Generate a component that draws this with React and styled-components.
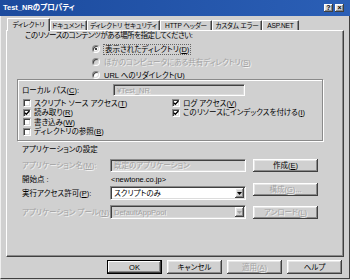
import React from "react";
import styled, { createGlobalStyle, css } from "styled-components";

const FACE = `"Liberation Sans", "Noto Sans CJK JP", sans-serif`;
const BG = "#d0d0d0";
const DIS = "#a2a2a2";

const Global = createGlobalStyle`
  html, body { margin: 0; padding: 0; background: ${BG}; }
  body {
    font-family: ${FACE};
    font-size: 7.5px;
    font-feature-settings: "palt";
    color: #000;
  }
  #root { width: 350px; height: 280px; }
  u { text-decoration: underline; text-underline-offset: 1px; }
`;

const disabledText = css`
  color: ${DIS};
  text-shadow: 1px 1px 0 rgba(255, 255, 255, 0.75);
`;

const raised = css`
  background: ${BG};
  box-shadow: inset -1px -1px 0 #404040, inset 1px 1px 0 #ffffff,
    inset -2px -2px 0 #8a8a8a, inset 2px 2px 0 #e6e6e6;
`;

const sunken = css`
  border: 1px solid;
  border-color: #8a8a8a #ffffff #ffffff #8a8a8a;
  box-shadow: inset 1px 1px 0 #404040, inset -1px -1px 0 #dcdcdc;
  box-sizing: border-box;
`;

const Win = styled.div`
  width: 350px;
  height: 279px;
  display: flex;
  flex-direction: column;
  background: ${BG};
  overflow: hidden;
`;

const TitleBar = styled.div`
  height: 16px;
  flex: none;
  display: flex;
  align-items: center;
  padding: 0 6px 0 3px;
  background: linear-gradient(90deg, #1c4b9e, #2b5fb6);
  color: #fff;
  font-weight: bold;
  font-size: 7.5px;
  line-height: 16px;
`;

const TitleText = styled.span`
  white-space: nowrap;
`;

const CapButtons = styled.div`
  margin-left: auto;
  display: flex;
  gap: 2px;
`;

const CapButton = styled.span`
  ${raised};
  width: 9px;
  height: 8px;
  display: flex;
  align-items: center;
  justify-content: center;
  color: #000;
  font-size: 7px;
  line-height: 8px;
  font-weight: bold;
`;

const Body = styled.div`
  flex: 1;
  display: flex;
  flex-direction: column;
  padding: 0 5px 0 5px;
  border-left: 1px solid #efefef;
  border-right: 1px solid #404040;
  border-bottom: 1px solid #404040;
`;

const TabStrip = styled.div`
  height: 14px;
  display: flex;
  align-items: flex-end;
  padding-left: 1px;
  position: relative;
  z-index: 1;
`;

const Tab = styled.div`
  width: ${(p) => p.$w}px;
  height: ${(p) => (p.$active ? 13 : 10)}px;
  ${(p) => (p.$active ? "margin-bottom: -1px;" : "")}
  box-sizing: border-box;
  background: ${BG};
  border-top: 1px solid #fff;
  border-left: 1px solid #fff;
  border-right: 1px solid #404040;
  border-radius: 1px 1px 0 0;
  box-shadow: inset -1px 0 0 #8a8a8a;
  display: flex;
  justify-content: center;
  align-items: ${(p) => (p.$active ? "flex-start" : "center")};
  padding-top: ${(p) => (p.$active ? 1 : 0)}px;
  font-size: 6.6px;
  line-height: 9px;
  white-space: nowrap;
  letter-spacing: -0.15px;
`;

const Panel = styled.div`
  height: 227px;
  box-sizing: border-box;
  border-top: 1px solid #fff;
  border-left: 1px solid #fff;
  border-right: 1px solid #404040;
  border-bottom: 1px solid #404040;
  box-shadow: inset -1px -1px 0 #8a8a8a;
  display: flex;
  flex-direction: column;
`;

const Intro = styled.div`
  height: 10px;
  line-height: 10px;
  margin-left: 18px;
  white-space: nowrap;
  letter-spacing: -0.5px;
`;

const RadioList = styled.div`
  margin: 3px 0 0 85px;
  display: flex;
  flex-direction: column;
  gap: 3px;
`;

const OptionRow = styled.div`
  height: ${(p) => p.$h || 10}px;
  display: flex;
  align-items: center;
  gap: ${(p) => p.$gap || 4}px;
  white-space: nowrap;
  line-height: 9px;
  ${(p) => p.$disabled && disabledText};
`;

const RadioDot = styled.span`
  ${sunken};
  width: 8px;
  height: 8px;
  border-radius: 50%;
  flex: none;
  background: ${(p) => (p.$disabled ? BG : "#fff")};
  display: flex;
  align-items: center;
  justify-content: center;
  &::after {
    content: "";
    width: 2px;
    height: 2px;
    border-radius: 50%;
    background: ${(p) => (p.$checked ? "#000" : "transparent")};
  }
`;

const Focus = styled.span`
  outline: 1px dotted #666;
  outline-offset: 0;
  padding: 0 1px;
  line-height: 9px;
`;

const GroupBox = styled.div`
  margin: -1px 0 0 10px;
  width: 306px;
  height: 62px;
  box-sizing: border-box;
  border: 1px solid #8a8a8a;
  box-shadow: 1px 1px 0 #fff, inset 1px 1px 0 #fff;
  padding: 4px 0 0 4px;
  display: flex;
  flex-direction: column;
`;

const PathRow = styled.div`
  height: 12px;
  display: flex;
  align-items: center;
`;

const FieldLabel = styled.span`
  width: ${(p) => p.$w}px;
  flex: none;
  white-space: nowrap;
  line-height: 9px;
  ${(p) => p.$disabled && disabledText};
`;

const TextBox = styled.div`
  ${sunken};
  width: ${(p) => p.$w}px;
  height: ${(p) => p.$h || 12}px;
  background: ${(p) => (p.$disabled ? BG : "#fff")};
  display: flex;
  align-items: center;
  padding-left: 3px;
  white-space: nowrap;
  line-height: 9px;
  overflow: hidden;
  ${(p) => p.$disabled && disabledText};
`;

const Checks = styled.div`
  margin: 2.5px 0 0 1px;
  display: flex;
`;

const CheckCol = styled.div`
  width: ${(p) => p.$w}px;
  display: grid;
  grid-auto-rows: 9.5px;
`;

const CheckBoxBox = styled.span`
  ${sunken};
  width: 8px;
  height: 8px;
  flex: none;
  background: #fff;
  display: flex;
  align-items: center;
  justify-content: center;
`;

const SectionTitle = styled.div`
  margin: 4px 0 0 15px;
  height: 10px;
  line-height: 10px;
  white-space: nowrap;
`;

const AppSection = styled.div`
  margin: 4px 0 0 15px;
  display: flex;
`;

const Fields = styled.div`
  width: 224px;
  display: flex;
  flex-direction: column;
`;

const FieldRow = styled.div`
  height: ${(p) => p.$h}px;
  margin-top: ${(p) => p.$mt || 0}px;
  display: flex;
  align-items: center;
`;

const Value = styled.span`
  padding-left: 1px;
  white-space: nowrap;
  line-height: 9px;
`;

const Select = styled.div`
  ${sunken};
  width: 136px;
  height: 14px;
  background: ${(p) => (p.$disabled ? BG : "#fff")};
  display: flex;
  align-items: center;
  padding: 0 1px 0 3px;
  line-height: 9px;
  ${(p) => p.$disabled && disabledText};
`;

const SelectText = styled.span`
  flex: 1;
  white-space: nowrap;
`;

const Arrow = styled.span`
  ${raised};
  width: 9px;
  height: 10px;
  flex: none;
  display: flex;
  align-items: center;
  justify-content: center;
`;

const SideButtons = styled.div`
  margin-left: 7px;
  display: flex;
  flex-direction: column;
  gap: 10.5px;
`;

const Button = styled.div`
  ${raised};
  width: ${(p) => p.$w}px;
  height: ${(p) => p.$h || 13}px;
  box-sizing: border-box;
  display: flex;
  align-items: center;
  justify-content: center;
  white-space: nowrap;
  line-height: 9px;
  ${(p) => p.$disabled && disabledText};
  ${(p) =>
    p.$default &&
    css`
      outline: 1px solid #000;
      outline-offset: -1px;
      box-shadow: inset -2px -2px 0 #404040, inset 2px 2px 0 #ffffff,
        inset -3px -3px 0 #8a8a8a;
    `};
`;

const ButtonBar = styled.div`
  margin: 3px 2px 0 0;
  display: flex;
  justify-content: flex-end;
  gap: 5px;
`;

const Tick = () => (
  <svg width="6" height="6" viewBox="0 0 6 6">
    <path d="M0.6 2.6 L2.3 4.3 L5.4 1.0" fill="none" stroke="#000" strokeWidth="1.3" />
  </svg>
);

const Tri = ({ color }) => (
  <svg width="5" height="3" viewBox="0 0 5 3">
    <path d="M0 0 H5 L2.5 3 Z" fill={color} />
  </svg>
);

const Check = ({ checked, children }) => (
  <OptionRow $h={9.5} $gap={3}>
    <CheckBoxBox>{checked ? <Tick /> : null}</CheckBoxBox>
    <span>{children}</span>
  </OptionRow>
);

const Radio = ({ checked, disabled, children }) => (
  <OptionRow $disabled={disabled}>
    <RadioDot $checked={checked} $disabled={disabled} />
    {children}
  </OptionRow>
);

const TABS = [
  { label: "ディレクトリ", w: 43, active: true },
  { label: "ドキュメント", w: 37 },
  { label: "ディレクトリ セキュリティ", w: 73 },
  { label: "HTTP ヘッダー", w: 52 },
  { label: "カスタム エラー", w: 50 },
  { label: "ASP.NET", w: 37 },
];

export default function App() {
  return (
    <>
      <Global />
      <Win>
        <TitleBar>
          <TitleText>Test_NRのプロパティ</TitleText>
          <CapButtons>
            <CapButton>?</CapButton>
            <CapButton>×</CapButton>
          </CapButtons>
        </TitleBar>
        <Body>
          <TabStrip>
            {TABS.map((t) => (
              <Tab key={t.label} $w={t.w} $active={t.active}>
                {t.label}
              </Tab>
            ))}
          </TabStrip>
          <Panel>
            <Intro>このリソースのコンテンツがある場所を指定してください:</Intro>
            <RadioList>
              <Radio checked>
                <Focus>
                  表示されたディレクトリ(<u>D</u>)
                </Focus>
              </Radio>
              <Radio disabled>
                <span>
                  ほかのコンピュータにある共有ディレクトリ(<u>S</u>)
                </span>
              </Radio>
              <Radio>
                <span>
                  URL へのリダイレクト(<u>U</u>)
                </span>
              </Radio>
            </RadioList>
            <GroupBox>
              <PathRow>
                <FieldLabel $w={91}>
                  ローカル パス(<u>C</u>):
                </FieldLabel>
                <TextBox $w={132} $disabled>
                  ¥Test_NR
                </TextBox>
              </PathRow>
              <Checks>
                <CheckCol $w={149}>
                  <Check>
                    スクリプト ソース アクセス(<u>T</u>)
                  </Check>
                  <Check checked>
                    読み取り(<u>R</u>)
                  </Check>
                  <Check>
                    書き込み(<u>W</u>)
                  </Check>
                  <Check>
                    ディレクトリの参照(<u>B</u>)
                  </Check>
                </CheckCol>
                <CheckCol $w={140}>
                  <Check checked>
                    ログ アクセス(<u>V</u>)
                  </Check>
                  <Check checked>
                    このリソースにインデックスを付ける(<u>I</u>)
                  </Check>
                </CheckCol>
              </Checks>
            </GroupBox>
            <SectionTitle>アプリケーションの設定</SectionTitle>
            <AppSection>
              <Fields>
                <FieldRow $h={13}>
                  <FieldLabel $w={88} $disabled>
                    アプリケーション名(<u>M</u>):
                  </FieldLabel>
                  <TextBox $w={136} $h={13} $disabled>
                    既定のアプリケーション
                  </TextBox>
                </FieldRow>
                <FieldRow $h={12} $mt={1}>
                  <FieldLabel $w={88}>開始点 :</FieldLabel>
                  <Value>&lt;newtone.co.jp&gt;</Value>
                </FieldRow>
                <FieldRow $h={14} $mt={1}>
                  <FieldLabel $w={88}>
                    実行アクセス許可(<u>P</u>):
                  </FieldLabel>
                  <Select>
                    <SelectText>スクリプトのみ</SelectText>
                    <Arrow>
                      <Tri color="#000" />
                    </Arrow>
                  </Select>
                </FieldRow>
                <FieldRow $h={14} $mt={5}>
                  <FieldLabel $w={88} $disabled>
                    アプリケーション プール(<u>N</u>):
                  </FieldLabel>
                  <Select $disabled>
                    <SelectText>DefaultAppPool</SelectText>
                    <Arrow>
                      <Tri color="#a2a2a2" />
                    </Arrow>
                  </Select>
                </FieldRow>
              </Fields>
              <SideButtons>
                <Button $w={65}>
                  作成(<u>E</u>)
                </Button>
                <Button $w={65} $disabled>
                  構成(<u>G</u>)...
                </Button>
                <Button $w={65} $disabled>
                  アンロード(<u>L</u>)
                </Button>
              </SideButtons>
            </AppSection>
          </Panel>
          <ButtonBar>
            <Button $w={55} $h={14} $default>
              OK
            </Button>
            <Button $w={55} $h={14}>
              キャンセル
            </Button>
            <Button $w={55} $h={14} $disabled>
              適用(<u>A</u>)
            </Button>
            <Button $w={55} $h={14}>
              ヘルプ
            </Button>
          </ButtonBar>
        </Body>
      </Win>
    </>
  );
}
